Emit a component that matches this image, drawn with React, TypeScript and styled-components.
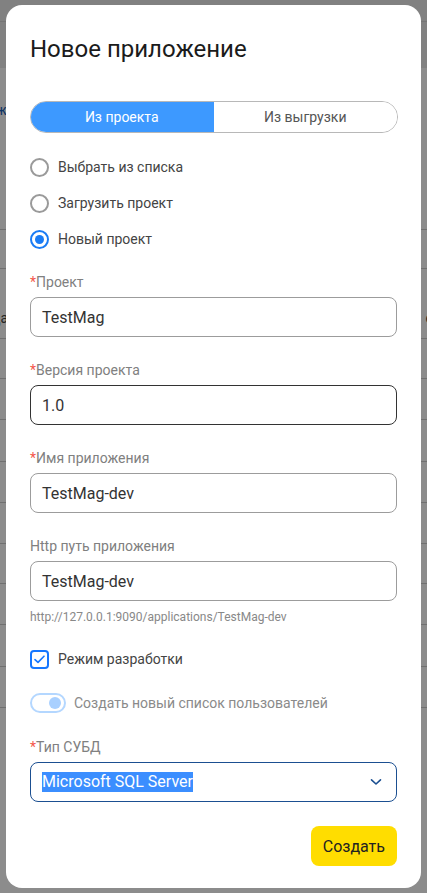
import styled, { createGlobalStyle } from "styled-components"

const GlobalStyle = createGlobalStyle`
  html, body {
    margin: 0;
    padding: 0;
    background: #f6f6f6;
    font-family: Roboto, "Noto Sans", "Liberation Sans", sans-serif;
  }
  * {
    box-sizing: border-box;
  }
`

/* page that lies under the dimmed overlay */
const Page = styled.div`
  width: 427px;
  height: 893px;
  overflow: hidden;
  background: #fff;
`

const TopBar = styled.div`
  height: 22px;
  background: #ececec;
  border-bottom: 1px solid #d6d6d6;
`

const HeaderBand = styled.div`
  height: 46px;
  background: #ececec;
`

const Crumb = styled.div`
  height: 161px;
  padding-top: 34px;
  font-size: 14px;
  color: #1d5fb8;
  margin-left: -4px;
`

const TableRow = styled.div<{ $h: number }>`
  height: ${(p) => p.$h}px;
  border-top: 1px solid #cdcdcd;
  display: flex;
  align-items: flex-end;
  justify-content: space-between;
  padding-bottom: 12px;
  font-size: 14px;
  color: #444;
`

const Fragment = styled.span`
  margin-left: -8px;
`

const FragmentRight = styled.span`
  margin-right: -6px;
`

const Overlay = styled.div`
  position: fixed;
  inset: 0;
  background: rgba(0, 0, 0, 0.45);
  padding: 5px 6px;
`

const Modal = styled.div`
  width: 415px;
  height: 883px;
  background: #fff;
  border-radius: 16px;
  padding: 28px 24px 22px 24px;
  display: flex;
  flex-direction: column;
`

const Title = styled.h1`
  margin: 0;
  font-size: 24px;
  line-height: 32px;
  font-weight: 400;
  color: #1b1b1b;
`

const Tabs = styled.div`
  margin-top: 36px;
  height: 32px;
  display: flex;
  border: 1px solid #b8b8b8;
  border-radius: 16px;
  overflow: hidden;
  width: 368px;
`

const Tab = styled.div<{ $active?: boolean }>`
  flex: 1;
  display: flex;
  align-items: center;
  justify-content: center;
  font-size: 14px;
  background: ${(p) => (p.$active ? "#3d99ff" : "#fff")};
  color: ${(p) => (p.$active ? "#fff" : "#555")};
  margin: ${(p) => (p.$active ? "-1px 0 -1px -1px" : "0")};
`

const RadioGroup = styled.div`
  margin-top: 22px;
  display: flex;
  flex-direction: column;
  gap: 12px;
`

const OptionRow = styled.label`
  display: flex;
  align-items: center;
  gap: 9px;
  height: 24px;
  font-size: 14px;
  color: #444;
`

const RadioCircle = styled.span<{ $checked?: boolean }>`
  width: 19px;
  height: 19px;
  border-radius: 50%;
  border: 2px solid ${(p) => (p.$checked ? "#1a7cf5" : "#9a9a9a")};
  display: flex;
  align-items: center;
  justify-content: center;
  &::after {
    content: "";
    width: 9px;
    height: 9px;
    border-radius: 50%;
    background: ${(p) => (p.$checked ? "#1a7cf5" : "transparent")};
  }
`

const Fields = styled.div`
  margin-top: 21px;
  display: flex;
  flex-direction: column;
  gap: 23px;
`

const Field = styled.div`
  display: flex;
  flex-direction: column;
`

const Label = styled.div`
  font-size: 14px;
  line-height: 20px;
  color: #808080;
  margin-bottom: 5px;
`

const Star = styled.span`
  color: #f4574b;
`

const Input = styled.div<{ $focused?: boolean }>`
  height: 40px;
  border: 1px solid ${(p) => (p.$focused ? "#333" : "#9c9c9c")};
  border-radius: 8px;
  padding: 0 11px;
  display: flex;
  align-items: center;
  font-size: 16px;
  color: #333;
`

const Helper = styled.div`
  margin-top: 8px;
  font-size: 12px;
  line-height: 16px;
  color: #888;
`

const CheckRow = styled.label`
  margin-top: 24px;
  display: flex;
  align-items: center;
  gap: 9px;
  height: 20px;
  font-size: 14px;
  color: #444;
`

const CheckBox = styled.span`
  width: 19px;
  height: 19px;
  border: 2px solid #1677ff;
  border-radius: 4px;
  display: flex;
  align-items: center;
  justify-content: center;
`

const SwitchRow = styled.label`
  margin-top: 24px;
  display: flex;
  align-items: center;
  gap: 8px;
  height: 20px;
  font-size: 14px;
  color: #8a8a8a;
`

const SwitchTrack = styled.span`
  width: 36px;
  height: 20px;
  border-radius: 10px;
  border: 2px solid #b4d7ff;
  display: flex;
  align-items: center;
  justify-content: flex-end;
  padding-right: 3px;
  &::after {
    content: "";
    width: 12px;
    height: 12px;
    border-radius: 50%;
    background: #a9d0ff;
  }
`

const SelectField = styled(Field)`
  margin-top: 24px;
`

const Select = styled.div`
  height: 40px;
  border: 1px solid #1b4f91;
  border-radius: 8px;
  padding: 0 14px 0 11px;
  display: flex;
  align-items: center;
  justify-content: space-between;
  font-size: 16px;
`

const Selected = styled.span`
  background: #3b8eff;
  color: #fff;
  line-height: 20px;
`

const Footer = styled.div`
  margin-top: auto;
  display: flex;
  justify-content: flex-end;
`

const PrimaryButton = styled.button`
  height: 40px;
  padding: 0 12px;
  border: none;
  border-radius: 8px;
  background: #ffdd00;
  color: #222;
  font-family: inherit;
  font-size: 16px;
`

const rows = [229, 268, 338, 378, 419, 461, 502, 543, 583, 624, 666, 707]

const App = () => {
  return (
    <>
      <GlobalStyle />
      <Page>
        <TopBar />
        <HeaderBand />
        <Crumb>ж</Crumb>
        {rows.map((y, i) => {
          const next = rows[i + 1] ?? y + 41
          return (
            <TableRow key={y} $h={next - y}>
              <Fragment>{i === 1 ? "да" : i > 6 && i < 9 ? "п" : i > 1 ? "а" : ""}</Fragment>
              <FragmentRight>{i === 1 ? "е" : i > 1 ? "." : ""}</FragmentRight>
            </TableRow>
          )
        })}
      </Page>
      <Overlay>
        <Modal>
          <Title>Новое приложение</Title>
          <Tabs>
            <Tab $active>Из проекта</Tab>
            <Tab>Из выгрузки</Tab>
          </Tabs>
          <RadioGroup>
            <OptionRow>
              <RadioCircle />
              Выбрать из списка
            </OptionRow>
            <OptionRow>
              <RadioCircle />
              Загрузить проект
            </OptionRow>
            <OptionRow>
              <RadioCircle $checked />
              Новый проект
            </OptionRow>
          </RadioGroup>
          <Fields>
            <Field>
              <Label>
                <Star>*</Star>Проект
              </Label>
              <Input>TestMag</Input>
            </Field>
            <Field>
              <Label>
                <Star>*</Star>Версия проекта
              </Label>
              <Input $focused>1.0</Input>
            </Field>
            <Field>
              <Label>
                <Star>*</Star>Имя приложения
              </Label>
              <Input>TestMag-dev</Input>
            </Field>
            <Field>
              <Label>Http путь приложения</Label>
              <Input>TestMag-dev</Input>
              <Helper>http://127.0.0.1:9090/applications/TestMag-dev</Helper>
            </Field>
          </Fields>
          <CheckRow>
            <CheckBox>
              <svg width="11" height="9" viewBox="0 0 11 9" fill="none">
                <path d="M1 4.6 L4 7.4 L10 1.2" stroke="#1677ff" strokeWidth="1.6" strokeLinecap="round" strokeLinejoin="round" />
              </svg>
            </CheckBox>
            Режим разработки
          </CheckRow>
          <SwitchRow>
            <SwitchTrack />
            Создать новый список пользователей
          </SwitchRow>
          <SelectField>
            <Label>
              <Star>*</Star>Тип СУБД
            </Label>
            <Select>
              <Selected>Microsoft SQL Server</Selected>
              <svg width="12" height="8" viewBox="0 0 12 8" fill="none">
                <path d="M1.5 1.8 L6 6 L10.5 1.8" stroke="#1b4f91" strokeWidth="1.6" strokeLinecap="round" strokeLinejoin="round" />
              </svg>
            </Select>
          </SelectField>
          <Footer>
            <PrimaryButton>Создать</PrimaryButton>
          </Footer>
        </Modal>
      </Overlay>
    </>
  )
}

export default App
